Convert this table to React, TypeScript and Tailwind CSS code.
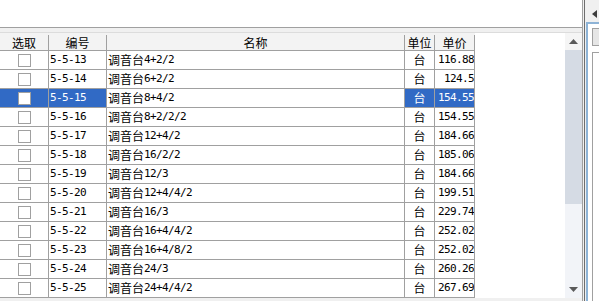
const cjk = "font-['Noto_Sans_CJK_SC',sans-serif] text-[12px]"
const mono = "font-['DejaVu_Sans_Mono',monospace] text-[11px] tracking-[-0.62px]"

const rows: [string, string, string][] = [
  ["5-5-13", "4+2/2", "116.88"],
  ["5-5-14", "6+2/2", "124.5"],
  ["5-5-15", "8+4/2", "154.55"],
  ["5-5-16", "8+2/2/2", "154.55"],
  ["5-5-17", "12+4/2", "184.66"],
  ["5-5-18", "16/2/2", "185.06"],
  ["5-5-19", "12/3", "184.66"],
  ["5-5-20", "12+4/4/2", "199.51"],
  ["5-5-21", "16/3", "229.74"],
  ["5-5-22", "16+4/4/2", "252.02"],
  ["5-5-23", "16+4/8/2", "252.02"],
  ["5-5-24", "24/3", "260.26"],
  ["5-5-25", "24+4/4/2", "267.69"],
]

const selectedRow = 2

function Check() {
  return <div className="h-[13px] w-[13px] border border-[#a0a0a0] bg-white" />
}

function HeaderRow() {
  const cols = [
    ["选取", "w-[49px]"],
    ["编号", "w-[58px]"],
    ["名称", "w-[298px]"],
    ["单位", "w-[30px]"],
    ["单价", "w-[40px]"],
  ]
  return (
    <div className="flex h-[18px] w-[475px] items-end border-b border-[#a0a0a0] bg-[#f3f3f3]">
      {cols.map(([label, w]) => (
        <div key={label} className={`${w} ${cjk} flex h-[15px] items-center justify-center border-r border-[#a0a0a0] leading-none text-black`}>
          {label}
        </div>
      ))}
    </div>
  )
}

function Row({ code, spec, price, selected }: { code: string; spec: string; price: string; selected: boolean }) {
  const hl = selected ? "bg-[#316ac5] text-white" : "bg-white text-black"
  return (
    <div className="flex h-[19px] w-[475px] border-b border-[#a0a0a0]">
      <div className={`flex w-[49px] items-center justify-center border-r border-[#a0a0a0] ${hl}`}>
        <Check />
      </div>
      <div className={`flex w-[58px] items-center border-r border-[#a0a0a0] pl-[1px] ${mono} ${hl}`}>{code}</div>
      <div className="flex w-[298px] items-center border-r border-[#a0a0a0] bg-white pl-[1px] text-black">
        <span className={`${cjk} leading-none`}>调音台</span>
        <span className={mono}>{spec}</span>
      </div>
      <div className={`flex w-[30px] items-center justify-center border-r border-[#a0a0a0] ${cjk} leading-none ${hl}`}>台</div>
      <div className={`flex w-[40px] items-center justify-end overflow-hidden whitespace-nowrap border-r border-[#a0a0a0] ${mono} ${hl}`}>
        {price}
      </div>
    </div>
  )
}

function ScrollBar() {
  return (
    <div className="flex w-[17px] flex-col">
      <div className="flex h-[17px] items-center justify-center bg-[#f5f5f5]">
        <svg width="9" height="5" viewBox="0 0 9 5">
          <path d="M4.5 0 L9 5 L0 5 Z" fill="#5a5a5a" />
        </svg>
      </div>
      <div className="h-[154px] bg-[#d5dbe4]" />
      <div className="flex-1 bg-[#f2f4f8]" />
      <div className="flex h-[17px] items-center justify-center bg-[#f2f4f8]">
        <svg width="9" height="5" viewBox="0 0 9 5">
          <path d="M0 0 L9 0 L4.5 5 Z" fill="#5a5a5a" />
        </svg>
      </div>
    </div>
  )
}

function SidePanel() {
  return (
    <div className="flex w-[16px]">
      <div className="w-px bg-[#f0f0f0]" />
      <div className="w-px bg-[#6d6d6d]" />
      <div className="w-px bg-[#f0f0f0]" />
      <div className="flex flex-1 flex-col">
        <div className="flex h-[22px] items-start bg-[#f0f0f0] pl-[6px] pt-[10px]">
          <svg width="5" height="8" viewBox="0 0 5 8">
            <path d="M5 0 L5 8 L0 4 Z" fill="#3c3c3c" />
          </svg>
        </div>
        <div className="flex flex-1 flex-col border-l-2 border-t-2 border-[#8db3d6] bg-white pl-[4px] pt-[4px]">
          <div className="h-[18px] border border-r-0 border-[#a0a0a0] bg-[#e6e6e6]" />
          <div className="mt-[6px] flex-1 border-l border-t border-[#a0a0a0] bg-white" />
        </div>
      </div>
    </div>
  )
}

export default function App() {
  return (
    <div className="flex h-[301px] w-[599px] overflow-hidden bg-[#f0f0f0]">
      <div className="flex w-[583px] flex-col border-r border-[#a0a0a0]">
        <div className="h-[28px] border-b border-[#a0a0a0] bg-white" />
        <div className="h-[4px]" />
        <div className="flex h-[266px] border-t border-[#dcdcdc] bg-white">
          <div className="flex-1 overflow-hidden">
            <HeaderRow />
            {rows.map(([code, spec, price], i) => (
              <Row key={code} code={code} spec={spec} price={price} selected={i === selectedRow} />
            ))}
          </div>
          <ScrollBar />
        </div>
      </div>
      <SidePanel />
    </div>
  )
}
